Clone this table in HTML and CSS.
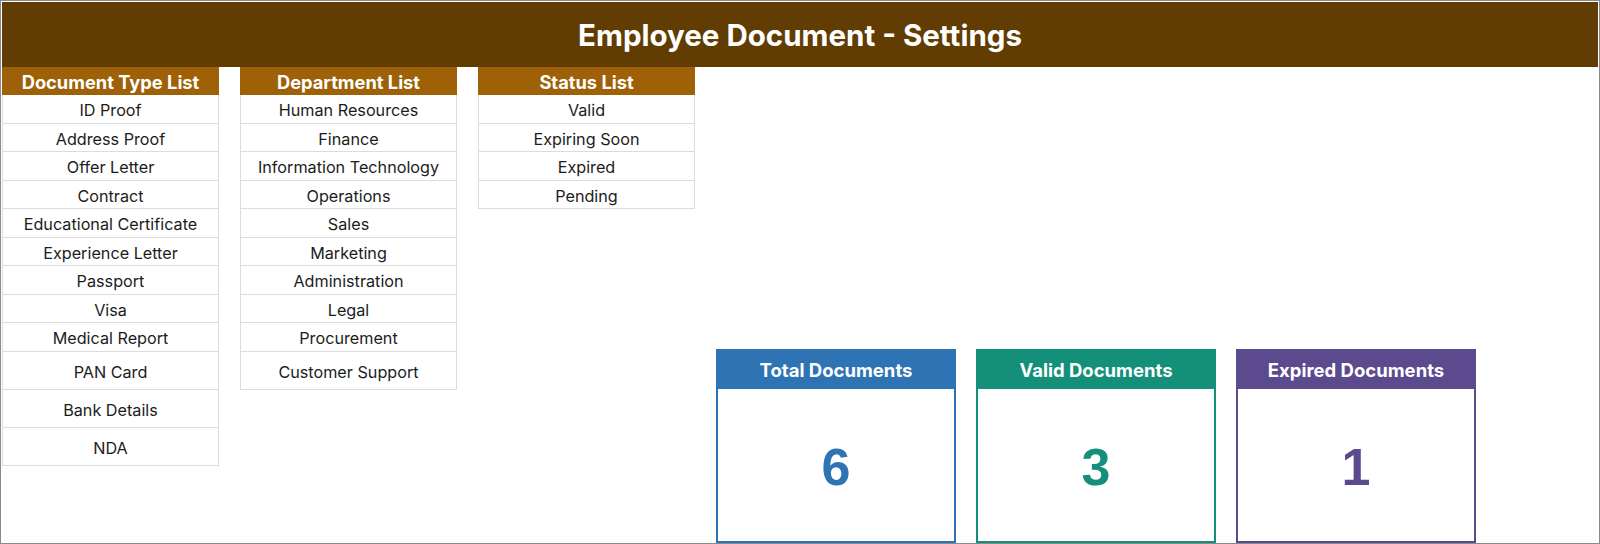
FILE: index.html
```html
<!DOCTYPE html>
<html>
<head>
<meta charset="utf-8">
<link rel="stylesheet" href="styles.css">
</head>
<body>
<div class="frame">
  <header class="title">Employee Document - Settings</header>
  <div class="content">
    <div class="lists">
      <div class="list">
        <div class="list-head">Document Type List</div>
        <div class="row">ID Proof</div>
        <div class="row">Address Proof</div>
        <div class="row">Offer Letter</div>
        <div class="row">Contract</div>
        <div class="row">Educational Certificate</div>
        <div class="row">Experience Letter</div>
        <div class="row">Passport</div>
        <div class="row">Visa</div>
        <div class="row">Medical Report</div>
        <div class="row tall">PAN Card</div>
        <div class="row tall">Bank Details</div>
        <div class="row tall">NDA</div>
      </div>
      <div class="list">
        <div class="list-head">Department List</div>
        <div class="row">Human Resources</div>
        <div class="row">Finance</div>
        <div class="row">Information Technology</div>
        <div class="row">Operations</div>
        <div class="row">Sales</div>
        <div class="row">Marketing</div>
        <div class="row">Administration</div>
        <div class="row">Legal</div>
        <div class="row">Procurement</div>
        <div class="row tall">Customer Support</div>
      </div>
      <div class="list">
        <div class="list-head">Status List</div>
        <div class="row">Valid</div>
        <div class="row">Expiring Soon</div>
        <div class="row">Expired</div>
        <div class="row">Pending</div>
      </div>
    </div>
    <div class="cards">
      <div class="card card-blue">
        <div class="card-head">Total Documents</div>
        <div class="card-value">6</div>
      </div>
      <div class="card card-teal">
        <div class="card-head">Valid Documents</div>
        <div class="card-value">3</div>
      </div>
      <div class="card card-purple">
        <div class="card-head">Expired Documents</div>
        <div class="card-value">1</div>
      </div>
    </div>
  </div>
</div>
</body>
</html>
```
FILE: styles.css
```css
html, body {
  margin: 0;
  padding: 0;
  background: #ffffff;
}

.frame {
  box-sizing: border-box;
  width: 1600px;
  height: 544px;
  border: 1px solid #8a8a8a;
  padding: 1px 1px 0 1px;
  overflow: hidden;
  font-family: Inter, "Liberation Sans", sans-serif;
  color: #1a1a1a;
}

.title {
  height: 65px;
  background: #613c03;
  color: #ffffff;
  font-weight: 700;
  font-size: 29.5px;
  display: flex;
  align-items: center;
  justify-content: center;
}

.content {
  display: flex;
  align-items: flex-start;
  gap: 21px;
}

.lists {
  display: flex;
  gap: 21px;
}

.list {
  width: 217px;
  display: flex;
  flex-direction: column;
}

.list-head {
  box-sizing: border-box;
  height: 28px;
  padding-top: 1px;
  background: #9e6108;
  color: #ffffff;
  font-weight: 700;
  font-size: 18.3px;
  display: flex;
  align-items: center;
  justify-content: center;
}

.row {
  box-sizing: border-box;
  height: 28.5px;
  padding-top: 3px;
  border: 1px solid #dcdcdc;
  border-top: none;
  display: flex;
  align-items: center;
  justify-content: center;
  font-size: 16.2px;
  color: #1c1c1c;
}

.row.tall {
  height: 38px;
}

.cards {
  display: flex;
  gap: 20px;
  margin-top: 282px;
}

.card {
  box-sizing: border-box;
  width: 240px;
  height: 194px;
  border: 2px solid;
  display: flex;
  flex-direction: column;
}

.card-head {
  height: 38px;
  color: #ffffff;
  font-weight: 700;
  font-size: 18.5px;
  display: flex;
  align-items: center;
  justify-content: center;
}

.card-value {
  flex: 1;
  padding-top: 3px;
  display: flex;
  align-items: center;
  justify-content: center;
  font-family: "Liberation Sans", Arial, sans-serif;
  font-weight: 700;
  font-size: 52px;
}

.card-blue { border-color: #2e74b5; }
.card-blue .card-head { background: #2e74b5; }
.card-blue .card-value { color: #2e74b5; }

.card-teal { border-color: #14907a; }
.card-teal .card-head { background: #14907a; }
.card-teal .card-value { color: #14907a; }

.card-purple { border-color: #5b4a8e; }
.card-purple .card-head { background: #5b4a8e; }
.card-purple .card-value { color: #5b4a8e; }
```
